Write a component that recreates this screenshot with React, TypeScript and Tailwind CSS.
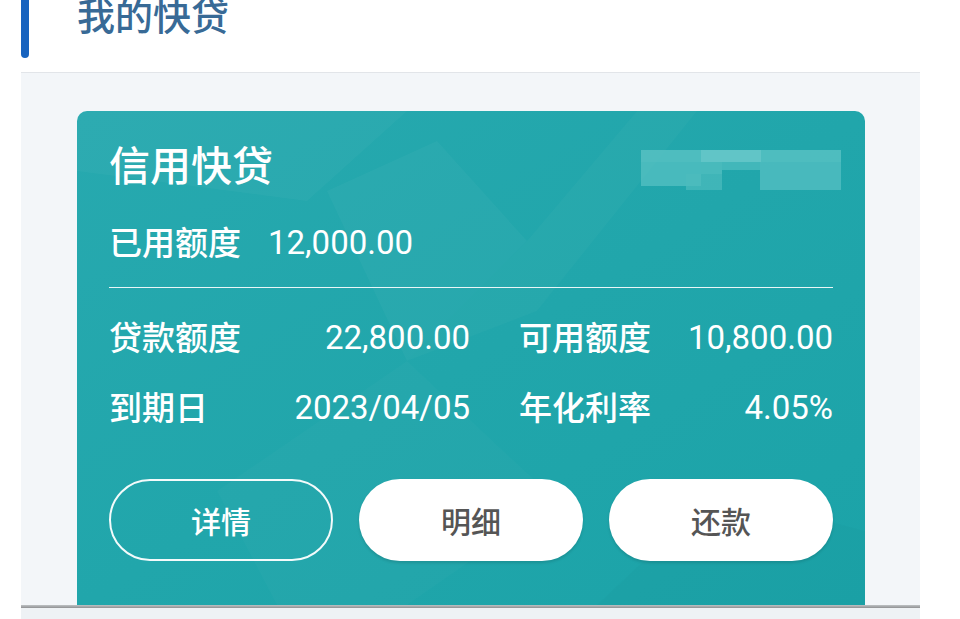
import React from "react";

const cjk = { fontFamily: '"Noto Sans CJK SC", "Noto Sans", sans-serif' };
const num = { fontFamily: 'Roboto, "Noto Sans CJK SC", sans-serif' };

function Row({ a, av, b, bv }: { a: string; av: string; b: string; bv: string }) {
  return (
    <div className="grid grid-cols-[361px_314px] gap-x-[49px] h-[40px] items-center text-white">
      <div className="flex items-center justify-between">
        <span className="text-[33px] leading-[40px] font-medium -translate-y-[2px]" style={cjk}>{a}</span>
        <span className="text-[33px] leading-[40px]" style={num}>{av}</span>
      </div>
      <div className="flex items-center justify-between">
        <span className="text-[33px] leading-[40px] font-medium -translate-y-[2px]" style={cjk}>{b}</span>
        <span className="text-[33px] leading-[40px]" style={num}>{bv}</span>
      </div>
    </div>
  );
}

export default function App() {
  return (
    <div className="relative w-[960px] h-[619px] bg-white overflow-hidden">
      {/* header */}
      <div className="flex h-[72px] pl-[21px]">
        <div className="w-[8px] h-[58px] bg-[#1763bf] rounded-b-[4px]" />
        <div
          className="ml-[48px] -mt-[8px] text-[38px] leading-[44px] text-[#386a96] font-medium"
          style={cjk}
        >
          我的快贷
        </div>
      </div>
      <div className="ml-[21px] w-[899px] h-[1px] bg-[#e2e5e9]" />
      {/* content */}
      <div className="ml-[21px] w-[899px] h-[532px] bg-[#f3f6f9] pt-[38px] pl-[56px]">
        <div className="relative w-[788px] h-[494px] rounded-t-[10px] bg-gradient-to-br from-[#27a9af] via-[#21a6ab] to-[#1ba3a8] overflow-hidden px-[32px] pt-[28px]">
          {/* decorative background */}
          <svg className="absolute inset-0 pointer-events-none" width="788" height="494" viewBox="0 0 788 494">
            <polygon points="0,0 330,0 230,90 0,60" fill="#ffffff" opacity="0.03" />
            <polygon points="250,80 360,30 450,130 330,250" fill="#ffffff" opacity="0.03" />
            <polygon points="330,250 450,130 560,0 620,0 460,200" fill="#ffffff" opacity="0.025" />
            <polygon points="140,380 330,250 480,390 330,494 200,494" fill="#ffffff" opacity="0.02" />
            <polygon points="520,494 640,380 788,420 788,494" fill="#000000" opacity="0.015" />
          </svg>
          <div className="relative flex justify-between h-[48px] items-center">
            <span className="text-white text-[41px] leading-[48px] font-medium" style={cjk}>信用快贷</span>
            {/* pixelated redaction */}
            <div className="relative w-[200px] h-[40px] mt-[14px] -mr-[8px]">
              <div className="absolute left-0 top-0 w-[200px] h-[12px] bg-[#5ec4c6] opacity-75" />
              <div className="absolute left-0 top-[12px] w-[60px] h-[24px] bg-[#5ec4c6] opacity-65" />
              <div className="absolute left-[45px] top-[24px] w-[36px] h-[16px] bg-[#4dbcbe] opacity-70" />
              <div className="absolute left-[60px] top-[12px] w-[21px] h-[12px] bg-[#55c0c2] opacity-75" />
              <div className="absolute left-[81px] top-[12px] w-[38px] h-[8px] bg-[#55c0c2] opacity-65" />
              <div className="absolute left-[119px] top-[12px] w-[81px] h-[28px] bg-[#5ac2c4] opacity-70" />
              <div className="absolute left-[60px] top-0 w-[60px] h-[12px] bg-[#6ccacb] opacity-65" />
            </div>
          </div>
          <div className="relative mt-[36px] h-[40px] flex items-center text-white">
            <span className="text-[33px] leading-[40px] font-medium -translate-y-[2px]" style={cjk}>已用额度</span>
            <span className="ml-[27px] text-[33px] leading-[40px]" style={num}>12,000.00</span>
          </div>
          <div className="relative mt-[24px] h-[1px] bg-white/90" />
          <div className="relative mt-[30px] flex flex-col gap-[30px]">
            <Row a="贷款额度" av="22,800.00" b="可用额度" bv="10,800.00" />
            <Row a="到期日" av="2023/04/05" b="年化利率" bv="4.05%" />
          </div>
          <div className="relative mt-[51px] flex gap-[26px]">
            <button className="w-[224px] h-[82px] rounded-full border-2 border-white/95 text-white text-[30px] font-medium" style={cjk}>
              详情
            </button>
            <button className="w-[224px] h-[82px] rounded-full bg-white text-[#555555] text-[30px] font-medium shadow-[0_2px_3px_rgba(0,0,0,0.12)]" style={cjk}>
              明细
            </button>
            <button className="w-[224px] h-[82px] rounded-full bg-white text-[#555555] text-[30px] font-medium shadow-[0_2px_3px_rgba(0,0,0,0.12)]" style={cjk}>
              还款
            </button>
          </div>
        </div>
      </div>
      {/* bottom strip */}
      <div className="relative ml-[21px] w-[899px] h-[14px] bg-[#eef2f5]">
        <div className="absolute left-0 top-0 w-[899px] h-[3px] bg-gradient-to-b from-black/20 to-black/40" />
      </div>
    </div>
  );
}
